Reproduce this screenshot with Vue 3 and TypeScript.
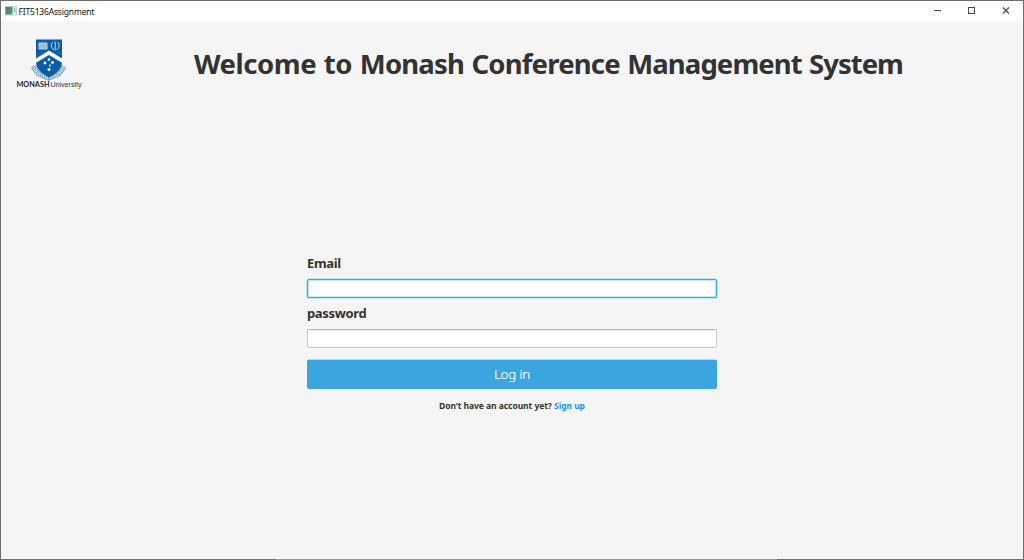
<script setup lang="ts">
import { onMounted, ref } from 'vue'

const email = ref('')
const password = ref('')
const emailField = ref<HTMLInputElement | null>(null)

// Heading words with their individual tracking, in px
const heading: { word: string; tracking: number }[] = [
  { word: 'Welcome', tracking: -0.45 },
  { word: 'to', tracking: -0.45 },
  { word: 'Monash', tracking: -0.8 },
  { word: 'Conference', tracking: -0.8 },
  { word: 'Management', tracking: -0.9 },
  { word: 'System', tracking: -1 },
]

onMounted(() => emailField.value?.focus())
</script>

<template>
  <div class="window">
    <header class="titlebar">
      <svg class="app-icon" width="12" height="10" viewBox="0 0 12 10">
        <defs>
          <linearGradient id="pane" x1="0" y1="0" x2="1" y2="1">
            <stop offset="0" stop-color="#4d7894" />
            <stop offset="1" stop-color="#55a06c" />
          </linearGradient>
        </defs>
        <rect x=".5" y=".5" width="11" height="8.5" fill="#e9edef" stroke="#b3bbc0" stroke-width=".7" />
        <rect x=".5" y="1" width="7" height="7.5" fill="url(#pane)" />
        <rect x="9.2" y="2" width="1.1" height="4.5" fill="#7cb391" />
      </svg>
      <span class="app-name">FIT5136Assignment</span>
      <div class="controls">
        <svg width="80" height="11" viewBox="0 0 80 11" fill="none" stroke="#444">
          <path d="M0 4.500h7" />
          <rect x="34.500" y="1.500" width="6" height="6" />
          <path d="M69 1.500l6 6M75 1.500l-6 6" stroke-width="1.100" />
        </svg>
      </div>
    </header>

    <section class="banner">
      <svg class="logo" width="68" height="52" viewBox="0 0 68 52">
        <path d="M18 29.500l5 7 10.500 4.500 10.500-4.500 5-7" fill="none" stroke="#5b93c2" stroke-width="5" />
        <path d="M18 29.500l5 7 10.500 4.500 10.500-4.500 5-7" fill="none" stroke="#e8f0f7" stroke-width="3.400" />
        <path d="M18 29.500l5 7 10.500 4.500 10.500-4.500 5-7" fill="none" stroke="#5b93c2" stroke-width="3" stroke-dasharray="1 1.200" />
        <path d="M21 2.500h26v22.500c0 7-6 12-13 15.500C27 37 21 32 21 25z" fill="#0b5da6" />
        <path d="M21 21.500l13-8 13 8v4.300L34 18l-13 7.800z" fill="#fff" />
        <g stroke="#c5daeb" stroke-width="1">
          <path d="M24 6h8v6h-8z" fill="#7dabd3" />
          <path d="M28 6v6M25 8h2M25 10h2M29 8h2M29 10h2" stroke-width=".8" />
          <path d="M38 5c-2.600 2-2 6.500 1 7.500M42.500 5c2.600 2 2 6.500-1 7.500M40.200 4.500v9" fill="none" />
        </g>
        <g fill="#fff">
          <circle cx="34" cy="22.500" r="1.300" />
          <circle cx="30" cy="26" r="1.400" />
          <circle cx="37.500" cy="25.500" r="1.400" />
          <circle cx="35" cy="28.500" r="1" />
          <circle cx="34" cy="32.500" r="1.500" />
        </g>
        <text x="1.500" y="49.500" class="logo-strong" textLength="33" lengthAdjust="spacingAndGlyphs">MONASH</text>
        <text x="35.500" y="49.500" class="logo-light" textLength="31" lengthAdjust="spacingAndGlyphs">University</text>
      </svg>
      <h1 class="title">
        <span v-for="part in heading" :key="part.word" :style="{ letterSpacing: part.tracking + 'px' }">{{ part.word + ' ' }}</span>
      </h1>
    </section>

    <form class="login" @submit.prevent>
      <label class="label" for="email">Email</label>
      <input id="email" ref="emailField" v-model="email" class="field" type="text" />
      <label class="label" for="password">password</label>
      <input id="password" v-model="password" class="field" type="password" />
      <button class="submit" type="submit">Log in</button>
      <p class="signup"><span>Don’t have an account yet?</span> <a class="link">Sign up</a></p>
    </form>
    <div class="edge"></div>
  </div>
</template>

<style>
body {
  overflow: hidden;
}
</style>

<style scoped>
.window {
  position: relative;
  box-sizing: border-box;
  width: 1024px;
  height: 560px;
  border: 1px solid #6e6e6e;
  background: #f5f5f5;
  color: #333;
  font-family: "Noto Sans", "Open Sans", sans-serif;
}
.edge {
  position: absolute;
  left: 275px;
  bottom: -1px;
  width: 501px;
  height: 1px;
  background: #999;
}
.titlebar {
  display: flex;
  align-items: center;
  height: 20px;
  padding-left: 4px;
  background: #fff;
}
.app-name {
  margin-left: 1.500px;
  font-size: 8.500px;
  line-height: 21px;
  letter-spacing: -0.180px;
  color: #111;
}
.controls {
  display: flex;
  margin-left: auto;
  padding-right: 9px;
}
.banner {
  display: flex;
  height: 234px;
  padding-left: 14px;
}
.logo {
  flex: none;
  margin-top: 16px;
}
.logo-strong {
  font: 700 7.500px Lato, sans-serif;
  fill: #222;
}
.logo-light {
  font: 7.500px "Liberation Sans", sans-serif;
  fill: #333;
}
.title {
  margin: 22.500px 0 0 111px;
  font-size: 27.500px;
  line-height: 40px;
  font-weight: 700;
  word-spacing: 1px;
  white-space: pre;
}
.login {
  display: flex;
  flex-direction: column;
  width: 410px;
  margin-left: 306px;
}
.label {
  height: 16px;
  margin-bottom: 8px;
  font-size: 13px;
  line-height: 17px;
  letter-spacing: -0.350px;
  font-weight: 700;
}
.field {
  box-sizing: border-box;
  height: 19px;
  margin: 0 0 7px;
  padding: 0 6px;
  border: 1px solid #c8c8c8;
  border-top-color: #b8b8b8;
  border-radius: 2px;
  outline: none;
  background: #fff;
  box-shadow: inset 0 1px 1px #eee;
  caret-color: transparent;
}
.field:focus {
  border-color: #35b4da;
  box-shadow: 0 0 0 .6px #8fd3e8, inset 0 0 0 .6px #8fd3e8;
}
.submit {
  height: 29px;
  margin-top: 5px;
  padding: 0;
  border: 0;
  border-radius: 2px;
  background: #3ba5de;
  box-shadow: 0 -.6px #6fbce5;
  color: #fff;
  font: 300 13.300px/29px "Noto Sans", sans-serif;
  -webkit-text-stroke: .2px #fff;
  letter-spacing: -0.150px;
}
.signup {
  margin: 8.500px 0 0;
  text-align: center;
  font-size: 8.500px;
  line-height: 16px;
  letter-spacing: -0.050px;
  font-weight: 700;
}
.link {
  color: #1e90ff;
}
</style>
